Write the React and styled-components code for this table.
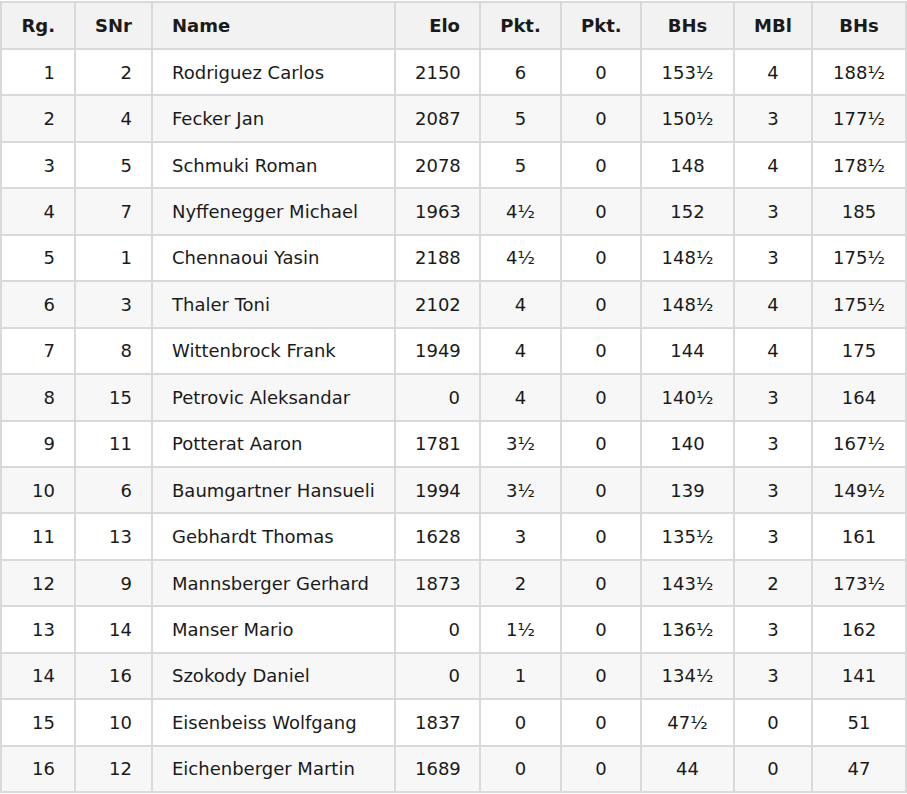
import React from "react";
import styled, { createGlobalStyle } from "styled-components";

const Global = createGlobalStyle`
  html, body { margin: 0; padding: 0; background: #fff; }
  body { font-family: "DejaVu Sans", Verdana, sans-serif; color: #1a1a1a; }
`;

const Wrap = styled.div`
  padding: 1px 0 0 0;
`;

const Table = styled.table`
  width: 906px;
  border-collapse: collapse;
  border: 2px solid #d9d9d9;
  font-size: 18px;
  table-layout: fixed;
`;

const HeadRow = styled.tr`
  height: 47px;
  background: #f2f2f2;
`;

const Row = styled.tr`
  height: 46.44px;
  background: ${(p) => (p.$alt ? "#f7f7f7" : "#ffffff")};
`;

const Th = styled.th`
  border: 2px solid #d9d9d9;
  font-weight: bold;
  padding: 0 19px;
  text-align: ${(p) => p.$align || "center"};
  white-space: nowrap;
`;

const Td = styled.td`
  border: 2px solid #d9d9d9;
  padding: 0 19px;
  text-align: ${(p) => p.$align || "center"};
  white-space: nowrap;
`;

const cols = [
  { label: "Rg.", w: 74, align: "right" },
  { label: "SNr", w: 77, align: "right" },
  { label: "Name", w: 243, align: "left" },
  { label: "Elo", w: 85, align: "right" },
  { label: "Pkt.", w: 81, align: "center" },
  { label: "Pkt.", w: 80, align: "center" },
  { label: "BHs", w: 93, align: "center" },
  { label: "MBl", w: 78, align: "center" },
  { label: "BHs", w: 94, align: "center" },
];

const data = [
  [1, 2, "Rodriguez Carlos", 2150, "6", 0, "153½", 4, "188½"],
  [2, 4, "Fecker Jan", 2087, "5", 0, "150½", 3, "177½"],
  [3, 5, "Schmuki Roman", 2078, "5", 0, "148", 4, "178½"],
  [4, 7, "Nyffenegger Michael", 1963, "4½", 0, "152", 3, "185"],
  [5, 1, "Chennaoui Yasin", 2188, "4½", 0, "148½", 3, "175½"],
  [6, 3, "Thaler Toni", 2102, "4", 0, "148½", 4, "175½"],
  [7, 8, "Wittenbrock Frank", 1949, "4", 0, "144", 4, "175"],
  [8, 15, "Petrovic Aleksandar", 0, "4", 0, "140½", 3, "164"],
  [9, 11, "Potterat Aaron", 1781, "3½", 0, "140", 3, "167½"],
  [10, 6, "Baumgartner Hansueli", 1994, "3½", 0, "139", 3, "149½"],
  [11, 13, "Gebhardt Thomas", 1628, "3", 0, "135½", 3, "161"],
  [12, 9, "Mannsberger Gerhard", 1873, "2", 0, "143½", 2, "173½"],
  [13, 14, "Manser Mario", 0, "1½", 0, "136½", 3, "162"],
  [14, 16, "Szokody Daniel", 0, "1", 0, "134½", 3, "141"],
  [15, 10, "Eisenbeiss Wolfgang", 1837, "0", 0, "47½", 0, "51"],
  [16, 12, "Eichenberger Martin", 1689, "0", 0, "44", 0, "47"],
];

export default function App() {
  return (
    <>
      <Global />
      <Wrap>
        <Table>
          <colgroup>
            {cols.map((c, i) => (
              <col key={i} style={{ width: c.w }} />
            ))}
          </colgroup>
          <thead>
            <HeadRow>
              {cols.map((c, i) => (
                <Th key={i} $align={c.align}>
                  {c.label}
                </Th>
              ))}
            </HeadRow>
          </thead>
          <tbody>
            {data.map((r, ri) => (
              <Row key={ri} $alt={ri % 2 === 1}>
                {r.map((v, ci) => (
                  <Td key={ci} $align={cols[ci].align}>
                    {v}
                  </Td>
                ))}
              </Row>
            ))}
          </tbody>
        </Table>
      </Wrap>
    </>
  );
}
